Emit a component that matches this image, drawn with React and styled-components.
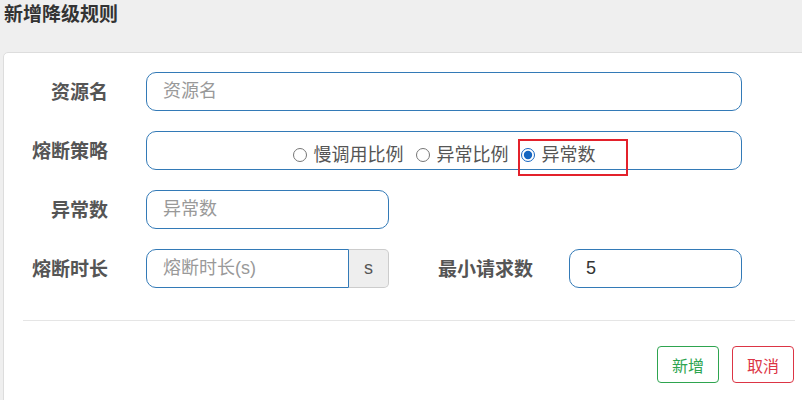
import React, { useState } from "react";
import styled, { createGlobalStyle } from "styled-components";

const GlobalStyle = createGlobalStyle`
  body {
    margin: 0;
    background: #efefef;
    overflow: hidden;
    font-family: "Liberation Sans", "Noto Sans CJK SC", sans-serif;
  }
`;

const strategies = ["慢调用比例", "异常比例", "异常数"];

export default function App() {
  const [strategy, setStrategy] = useState("异常数");
  const [minRequest, setMinRequest] = useState("5");

  return (
    <Page>
      <GlobalStyle />
      <Header>新增降级规则</Header>
      <Card>
        <Form>
          <Row>
            <Label>资源名</Label>
            <TextInput $w={596} placeholder="资源名" />
          </Row>
          <Row>
            <Label>熔断策略</Label>
            <RadioBox>
              {strategies.map((s) => (
                <RadioOption key={s}>
                  <input
                    type="radio"
                    name="strategy"
                    value={s}
                    checked={strategy === s}
                    onChange={() => setStrategy(s)}
                  />
                  {s}
                  {s === "异常数" && <Highlight />}
                </RadioOption>
              ))}
            </RadioBox>
          </Row>
          <Row>
            <Label>异常数</Label>
            <TextInput $w={243} placeholder="异常数" />
          </Row>
          <Row>
            <Label>熔断时长</Label>
            <InputGroup>
              <GroupInput placeholder="熔断时长(s)" />
              <Addon>s</Addon>
            </InputGroup>
            <Label $w={180} $pr={36}>最小请求数</Label>
            <TextInput
              $w={173}
              value={minRequest}
              onChange={(e) => setMinRequest(e.target.value)}
            />
          </Row>
        </Form>
        <Divider />
        <Footer>
          <Button $tone="#2ea44f">新增</Button>
          <Button $tone="#dc3545">取消</Button>
        </Footer>
      </Card>
    </Page>
  );
}

const Page = styled.div`
  width: 802px;
  height: 400px;
  overflow: hidden;
`;

const Header = styled.h4`
  margin: 0;
  height: 52px;
  padding-left: 4px;
  line-height: 30px;
  font-size: 19px;
  font-weight: bold;
  color: #333;
  box-sizing: border-box;
`;

const Card = styled.div`
  margin-left: 3px;
  width: 813px;
  height: 400px;
  box-sizing: border-box;
  background: #fff;
  border: 1px solid #ddd;
  border-radius: 5px;
  padding: 19px 20px 16px 20px;
`;

const Form = styled.div`
  display: flex;
  flex-direction: column;
  gap: 20px;
`;

const Row = styled.div`
  display: flex;
  align-items: center;
  height: 39px;
`;

const Label = styled.label`
  width: ${(p) => p.$w || 122}px;
  padding-right: ${(p) => p.$pr || 38}px;
  padding-top: 3px;
  box-sizing: border-box;
  text-align: right;
  font-size: 19px;
  font-weight: bold;
  color: #555;
  line-height: 36px;
  flex-shrink: 0;
`;

const TextInput = styled.input`
  width: ${(p) => p.$w}px;
  height: 39px;
  box-sizing: border-box;
  border: 1px solid #337ab7;
  border-radius: 10px;
  padding: 0 16px;
  font-family: inherit;
  font-size: 18px;
  color: #333;
  outline: none;

  &::placeholder {
    color: #999;
  }
`;

const RadioBox = styled.div`
  width: 596px;
  height: 39px;
  box-sizing: border-box;
  border: 1px solid #337ab7;
  border-radius: 10px;
  display: flex;
  justify-content: center;
  align-items: center;
  gap: 12px;
  padding-top: 8px;
`;

const RadioOption = styled.label`
  position: relative;
  display: inline-flex;
  align-items: center;
  gap: 7px;
  font-size: 18px;
  color: #555;
  line-height: 22px;

  input {
    width: 14px;
    height: 14px;
    margin: 0;
    accent-color: #1565c0;
  }
`;

const Highlight = styled.span`
  position: absolute;
  left: -3px;
  top: -5px;
  width: 110px;
  height: 37px;
  box-sizing: border-box;
  border: 2px solid #e3212b;
  pointer-events: none;
`;

const InputGroup = styled.div`
  display: flex;
  width: 243px;
  height: 39px;
`;

const GroupInput = styled(TextInput)`
  flex: 1;
  width: auto;
  min-width: 0;
  border-radius: 10px 0 0 10px;
`;

const Addon = styled.span`
  width: 40px;
  box-sizing: border-box;
  display: flex;
  align-items: center;
  justify-content: center;
  background: #eee;
  border: 1px solid #ccc;
  border-left: none;
  border-radius: 0 5px 5px 0;
  font-size: 18px;
  color: #555;
`;

const Divider = styled.hr`
  margin: 32px 0 0 -1px;
  border: none;
  border-top: 1px solid #e5e5e5;
`;

const Footer = styled.div`
  display: flex;
  justify-content: flex-end;
  gap: 13px;
  margin-top: 25px;
  padding-right: 1px;
`;

const Button = styled.button`
  width: 62px;
  height: 37px;
  background: #fff;
  border: 1px solid ${(p) => p.$tone};
  color: ${(p) => p.$tone};
  border-radius: 4px;
  font-family: inherit;
  font-size: 16px;
  cursor: pointer;
`;
